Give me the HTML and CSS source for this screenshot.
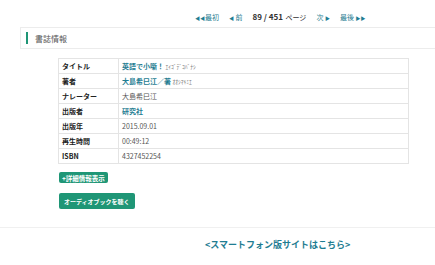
FILE: index.html
```html
<!DOCTYPE html>
<html lang="ja">
<head>
  <meta charset="UTF-8" />
  <title>書誌情報</title>
  <link rel="stylesheet" href="styles.css">
</head>
<body>

  <div class="pager">
    <a href="#"><span class="arrow">&#9664;&#9664;</span>最初</a>
    <a href="#"><span class="arrow">&#9664;</span> 前</a>
    <span class="page-count"><b>89 / 451</b> ページ</span>
    <a href="#">次 <span class="arrow">&#9654;</span></a>
    <a href="#">最後 <span class="arrow">&#9654;&#9654;</span></a>
  </div>

  <div class="section-head">
    <span class="bar"></span>
    <h2>書誌情報</h2>
  </div>

  <table class="info">
    <tr><th>タイトル</th><td><a href="#">英語で小噺！</a> <span class="kana">ｴｲｺﾞﾃﾞｺﾊﾞﾅｼ</span></td></tr>
    <tr><th>著者</th><td><a href="#">大島希巳江／著</a> <span class="kana">ｵｵｼﾏｷﾐｴ</span></td></tr>
    <tr><th>ナレーター</th><td>大島希巳江</td></tr>
    <tr><th>出版者</th><td><a href="#">研究社</a></td></tr>
    <tr><th>出版年</th><td>2015.09.01</td></tr>
    <tr><th>再生時間</th><td>00:49:12</td></tr>
    <tr><th>ISBN</th><td>4327452254</td></tr>
  </table>

  <div class="actions">
    <button class="btn btn-small">+詳細情報表示</button>
    <button class="btn btn-play">オーディオブックを聴く</button>
  </div>

  <div class="footer">
    <a href="#">&lt;スマートフォン版サイトはこちら&gt;</a>
  </div>

</body>
</html>
```

FILE: styles.css
```css
:root {
  --teal: #1f7d92;
  --green: #1f9676;
  --line: #e4e4e4;
  --text: #444;
}

* {
  box-sizing: border-box;
  margin: 0;
  padding: 0;
}

body {
  font-family: "Noto Sans CJK JP", "Noto Sans", sans-serif;
  background: #fff;
  color: var(--text);
  width: 435px;
  overflow: hidden;
}

a {
  color: var(--teal);
  text-decoration: none;
}

.pager {
  display: flex;
  align-items: center;
  gap: 10px;
  padding: 7px 0 0 195px;
  height: 27px;
  font-size: 7px;
  line-height: 12px;
}

.arrow {
  font-size: 5px;
}

.page-count {
  color: #333;
}

.page-count b {
  font-size: 8px;
  margin-right: 1px;
}

.section-head {
  display: flex;
  align-items: center;
  margin-left: 20px;
  width: 430px;
  height: 22px;
  border: 1px solid #ececec;
  border-right: none;
  padding-left: 5px;
}

.bar {
  width: 2px;
  height: 12px;
  background: var(--green);
  margin-right: 7px;
}

h2 {
  font-size: 8px;
  font-weight: normal;
  color: #555;
}

.info {
  margin: 9px 0 0 58px;
  width: 351px;
  border-collapse: collapse;
  border: 1px solid var(--line);
  font-size: 7px;
}

.info th,
.info td {
  height: 15px;
  border-bottom: 1px solid var(--line);
  text-align: left;
  padding: 0 3px;
}

.info th {
  width: 60px;
  color: #222;
  border-right: 1px solid var(--line);
}

.info td {
  color: #555;
}

.info td a {
  font-weight: bold;
}

.kana {
  font-size: 5.5px;
  color: #777;
}

.actions {
  display: flex;
  flex-direction: column;
  align-items: flex-start;
  gap: 10px;
  margin: 8px 0 0 59px;
}

.btn {
  font-family: inherit;
  border: none;
  border-radius: 2px;
  background: var(--green);
  color: #fff;
  font-weight: bold;
}

.btn-small {
  font-size: 6.5px;
  height: 11px;
  padding: 0 3px;
}

.btn-play {
  font-size: 6px;
  height: 16px;
  padding: 0 5px;
}

.footer {
  margin-top: 18px;
  border-top: 1px solid #f0f0f0;
  padding: 10px 0 0 205px;
  font-size: 9px;
  font-weight: bold;
}
```
